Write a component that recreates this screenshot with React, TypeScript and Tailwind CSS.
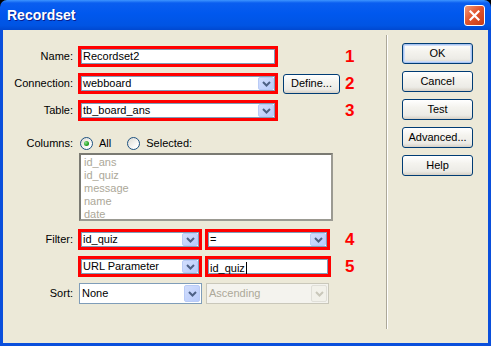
import React from "react";

function Chevron({ disabled }: { disabled?: boolean }) {
  return (
    <svg width="9" height="6" viewBox="0 0 9 6">
      <polyline
        points="1,1 4.5,4.5 8,1"
        fill="none"
        stroke={disabled ? "#C9C7BA" : "#4D6185"}
        strokeWidth="2"
      />
    </svg>
  );
}

function ArrowBtn({ disabled }: { disabled?: boolean }) {
  return (
    <div
      className={
        disabled
          ? "flex h-full w-[16px] items-center justify-center rounded-[2px] border border-[#E0DFD8] bg-[#F2F1EA]"
          : "flex h-full w-[16px] items-center justify-center rounded-[2px] border border-[#B9CBF6] bg-[linear-gradient(135deg,#D2DEFD_0%,#B8CBFB_100%)]"
      }
    >
      <Chevron disabled={disabled} />
    </div>
  );
}

// red highlight box drawn round a field
function Red({ className, children }: { className: string; children: React.ReactNode }) {
  return <div className={"flex h-[21px] border-[3px] border-[#FF0000] " + className}>{children}</div>;
}

function Inner({ text, arrow, caret }: { text: string; arrow?: boolean; caret?: boolean }) {
  return (
    <div className="flex flex-1 items-center border border-[#7F9DB9] bg-white py-0 pl-px pr-0">
      <span className="flex-1 leading-none">
        {text}
        {caret && <span className="ml-px inline-block h-[12px] w-px translate-y-[2px] bg-black" />}
      </span>
      {arrow && <ArrowBtn />}
    </div>
  );
}

function Num({ n }: { n: string }) {
  return <div className="ml-auto w-[12px] text-[17px] font-bold leading-none text-[#FF0000]">{n}</div>;
}

function Label({ text }: { text: string }) {
  return <div className="w-[70px] shrink-0 text-right">{text}</div>;
}

function Radio({ checked }: { checked?: boolean }) {
  return (
    <div className="flex h-[13px] w-[13px] items-center justify-center rounded-full border border-[#1C5180] bg-[linear-gradient(135deg,#DCDBD3_0%,#FFFFFF_80%)]">
      {checked && (
        <div className="h-[5px] w-[5px] rounded-full bg-[radial-gradient(circle_at_35%_35%,#8CE08C_0%,#21A121_60%,#1A7F1A_100%)]" />
      )}
    </div>
  );
}

function XpButton({ label, def }: { label: string; def?: boolean }) {
  return (
    <div
      className={
        "flex h-[21px] w-[71px] items-center justify-center rounded-[3px] border border-[#003C74] bg-[linear-gradient(180deg,#FFFFFF_0%,#F4F3EE_40%,#ECEBE6_80%,#D6D0C5_100%)] " +
        (def ? "shadow-[inset_0_0_0_1px_#A8C4F2,inset_0_0_0_2px_#CEDDF8]" : "")
      }
    >
      {label}
    </div>
  );
}

const columns = ["id_ans", "id_quiz", "message", "name", "date"];

export default function App() {
  return (
    <div className="h-[346px] w-[491px] bg-black font-['Liberation_Sans',Arial,sans-serif] text-[11px] text-black">
      <div className="flex h-full flex-col">
        {/* title bar */}
        <div className="flex h-[30px] items-center justify-between rounded-t-[7px] bg-[linear-gradient(180deg,#3D95FF_0%,#0A5EF0_10%,#0058EE_45%,#0054E3_85%,#0048D0_100%)] pl-[7px] pr-[6px]">
          <span className="text-[14px] font-bold text-white [text-shadow:1px_1px_0_#0A1E8C]">Recordset</span>
          <div className="flex h-[21px] w-[21px] items-center justify-center rounded-[3px] border border-white bg-[linear-gradient(135deg,#F09A7A_0%,#E2562E_45%,#C63B16_100%)]">
            <svg width="11" height="11" viewBox="0 0 11 11">
              <path d="M1.5 1.5 L9.5 9.5 M9.5 1.5 L1.5 9.5" stroke="white" strokeWidth="2.2" strokeLinecap="square" />
            </svg>
          </div>
        </div>

        {/* client area */}
        <div className="flex flex-1 border-x-[3px] border-b-[3px] border-[#0A4FDC] bg-[#ECE9D8]">
          {/* form */}
          <div className="flex w-[383px] flex-col pt-[16px]">
            <div className="flex items-center">
              <Label text="Name:" />
              <div className="ml-[5px] flex w-[279px] items-center">
                <Red className="w-[200px]">
                  <Inner text="Recordset2" />
                </Red>
                <Num n="1" />
              </div>
            </div>

            <div className="mt-[6px] flex items-center">
              <Label text="Connection:" />
              <div className="ml-[5px] flex w-[279px] items-center">
                <Red className="w-[200px]">
                  <Inner text="webboard" arrow />
                </Red>
                <div className="ml-[5px] flex h-[20px] w-[57px] items-center justify-center rounded-[3px] border border-[#003C74] bg-[linear-gradient(180deg,#FFFFFF_0%,#F4F3EE_40%,#ECEBE6_80%,#D6D0C5_100%)]">
                  Define...
                </div>
                <Num n="2" />
              </div>
            </div>

            <div className="mt-[6px] flex items-center">
              <Label text="Table:" />
              <div className="ml-[5px] flex w-[279px] items-center">
                <Red className="w-[200px]">
                  <Inner text="tb_board_ans" arrow />
                </Red>
                <Num n="3" />
              </div>
            </div>

            <div className="mt-[15px] flex h-[14px] items-center">
              <Label text="Columns:" />
              <div className="ml-[7px] flex items-center">
                <Radio checked />
                <span className="ml-[6px]">All</span>
                <div className="ml-[16px]">
                  <Radio />
                </div>
                <span className="ml-[6px]">Selected:</span>
              </div>
            </div>

            <div className="ml-[76px] mt-[3px] h-[68px] w-[254px] border-2 border-[#9B9A92] border-t-[#7A7A72] border-l-[#7A7A72] bg-white pl-[3px] pt-px text-[#ACA899]">
              {columns.map((c) => (
                <div key={c} className="h-[13px] leading-[13px]">
                  {c}
                </div>
              ))}
            </div>

            <div className="mt-[8px] flex items-center">
              <Label text="Filter:" />
              <div className="ml-[5px] flex w-[279px] items-center">
                <Red className="w-[124px]">
                  <Inner text="id_quiz" arrow />
                </Red>
                <Red className="ml-[3px] w-[125px]">
                  <Inner text="=" arrow />
                </Red>
                <Num n="4" />
              </div>
            </div>

            <div className="mt-[6px] flex items-center">
              <div className="w-[70px] shrink-0" />
              <div className="ml-[5px] flex w-[279px] items-center">
                <Red className="w-[124px]">
                  <Inner text="URL Parameter" arrow />
                </Red>
                <Red className="ml-[3px] w-[126px]">
                  <Inner text="id_quiz" caret />
                </Red>
                <Num n="5" />
              </div>
            </div>

            <div className="mt-[6px] flex items-center">
              <Label text="Sort:" />
              <div className="ml-[6px] flex items-center">
                <div className="flex h-[21px] w-[123px] items-center border border-[#7F9DB9] bg-white py-px pl-[2px] pr-px">
                  <span className="flex-1">None</span>
                  <ArrowBtn />
                </div>
                <div className="ml-[4px] flex h-[21px] w-[123px] items-center border border-[#C9C7BA] bg-[#F4F3EE] py-px pl-[2px] pr-px text-[#ACA899]">
                  <span className="flex-1">Ascending</span>
                  <ArrowBtn disabled />
                </div>
              </div>
            </div>
          </div>

          {/* separator */}
          <div className="mb-[14px] mt-[5px] w-[2px] border-l border-r border-l-[#ACA899] border-r-white" />

          {/* buttons */}
          <div className="ml-[14px] flex flex-col gap-[7px] pt-[13px]">
            <XpButton label="OK" def />
            <XpButton label="Cancel" />
            <XpButton label="Test" />
            <XpButton label="Advanced..." />
            <XpButton label="Help" />
          </div>
        </div>
      </div>
    </div>
  );
}
